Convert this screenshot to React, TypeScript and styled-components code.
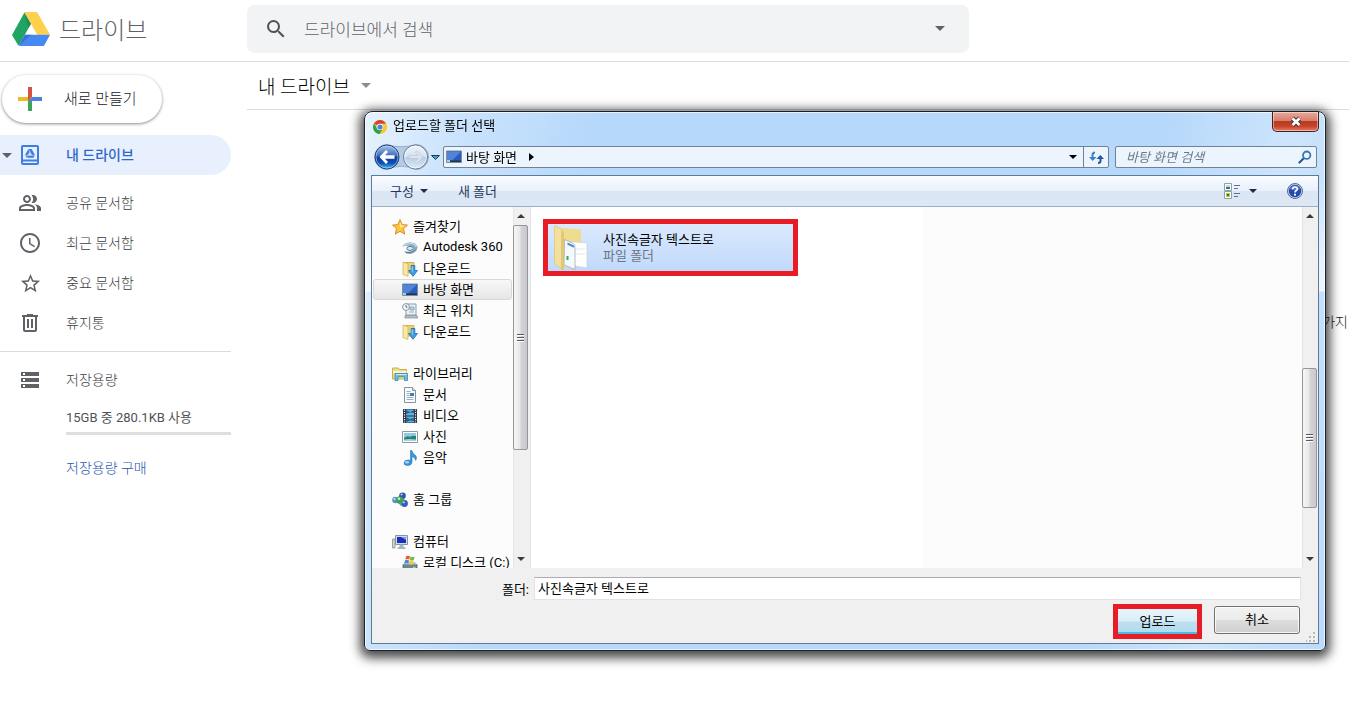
import React from 'react';
import styled, { createGlobalStyle, css } from 'styled-components';
import { MdAccessTime, MdOutlinePeopleAlt, MdSearch, MdStarBorder } from 'react-icons/md';

const GlobalStyle = createGlobalStyle`
  *, *::before, *::after { box-sizing: border-box; }
  body { margin: 0; background: #fff; }
  body, button, input { font-family: Roboto, 'Noto Sans CJK KR', sans-serif; }
  button, input { margin: 0; padding: 0; border: 0; background: none; color: inherit; }
  button { cursor: pointer; }
  svg { display: block; flex: none; }
`;

/* ---------- Drive page ---------- */

const Page = styled.div`
  min-height: 100vh;
  display: flex;
  flex-direction: column;
  color: #4f5357;
  font-size: 14px;
  overflow: hidden;
`;

const Header = styled.header`
  display: flex;
  height: 62px;
  padding-bottom: 4px;
  align-items: center;
  border-bottom: 1px solid #dadce0;
`;

const Brand = styled.a`
  display: flex;
  align-items: center;
  gap: 9px;
  width: 247px;
  padding-left: 12px;
  color: #5f6368;
  font-size: 24px;
  font-weight: 300;
  text-decoration: none;
`;

const SearchBox = styled.form`
  display: flex;
  align-items: center;
  flex: 0 1 722px;
  height: 48px;
  padding: 0 17px;
  border-radius: 8px;
  background: #f1f3f4;
`;

const SearchInput = styled.input`
  flex: 1;
  min-width: 0;
  margin-left: 16px;
  padding-top: 2px;
  font-size: 17px;
  font-weight: 300;
  outline: none;
  &::placeholder { color: #5f6368; opacity: 1; }
`;

const IconButton = styled.button`
  display: flex;
  align-items: center;
  justify-content: center;
  width: 24px;
  height: 24px;
`;

const Columns = styled.div`
  display: flex;
  flex: 1;
`;

const Sidebar = styled.aside`
  width: 231px;
  margin-right: 16px;
  flex: none;
`;

const NewButton = styled.button`
  display: flex;
  align-items: center;
  gap: 22px;
  width: 160px;
  height: 48px;
  margin: 13px 0 12px 2px;
  padding-left: 16px;
  border-radius: 24px;
  background: #fff;
  color: #202124;
  font-size: 15px;
  font-weight: 300;
  box-shadow: 0 1px 2px rgba(60, 64, 67, 0.35), 0 1px 3px 1px rgba(60, 64, 67, 0.2);
  span { padding-bottom: 3px; }
`;

const NavLink = styled.a<{ $active?: boolean }>`
  display: grid;
  grid-template-columns: 18px 24px 1fr;
  align-items: center;
  height: 40px;
  color: #5f6368;
  text-decoration: none;
  span { padding: 0 0 2px 24px; color: #3c4043; font-weight: 300; }
  svg { justify-self: center; }
  svg:first-child { justify-self: start; margin-left: 2px; }
  ${(p) =>
    p.$active &&
    css`
      margin-bottom: 8px;
      border-radius: 0 20px 20px 0;
      background: #e8f0fe;
      span { color: #2f67c9; font-weight: 500; }
    `}
`;

const Divider = styled.hr`
  height: 1px;
  margin: 8px 0;
  border: 0;
  background: #dadce0;
`;

const Quota = styled.div`
  display: flex;
  flex-direction: column;
  gap: 4px;
  margin-left: 66px;
  padding-top: 8px;
  font-size: 13px;
  line-height: 20px;
`;

const QuotaBar = styled.div`
  height: 3px;
  background: #dedede;
`;

const BuyLink = styled.a`
  margin-top: 19px;
  color: #1f57b0;
  font-size: 14px;
  font-weight: 300;
  text-decoration: none;
`;

const Main = styled.main`
  flex: 1;
  min-width: 0;
`;

const PathBar = styled.div`
  display: flex;
  align-items: center;
  height: 48px;
  padding-left: 11px;
  border-bottom: 1px solid #dadce0;
`;

const PathButton = styled.button`
  display: flex;
  align-items: center;
  gap: 11px;
  color: #000;
  font-size: 19px;
  font-weight: 300;
`;

const EmptyHint = styled.p`
  margin: 202px 1px 0 0;
  color: #202124;
  font-weight: 300;
  line-height: 20px;
  text-align: right;
`;

/* ---------- Folder picker window ---------- */

const Window = styled.section`
  position: fixed;
  top: 111px;
  right: 23px;
  bottom: 65px;
  left: 364px;
  display: flex;
  flex-direction: column;
  padding: 0 6px 6px;
  border: 1px solid #17242e;
  border-radius: 8px 8px 6px 6px;
  background:
    linear-gradient(180deg, rgba(255, 255, 255, 0) 60px, rgba(255, 255, 255, 0.75) 179px, rgba(255, 255, 255, 0) 180px),
    linear-gradient(100deg, #e6f2fe 0, #cbe3fc 9%, #b6d8fb 22%, #b6d8fb 76%, #cde4fc 88%, #bcdafa 100%);
  box-shadow: inset 0 0 0 1px rgba(255, 255, 255, 0.7), 0 3px 11px 4px rgba(0, 0, 0, 0.72);
  color: #000;
  font-size: 13px;
  button, input { font-size: 13px; }
`;

const TitleBar = styled.div`
  display: flex;
  align-items: center;
  height: 30px;
  padding-left: 2px;
`;

const Title = styled.h1`
  flex: 1;
  margin: 0 0 0 6px;
  padding-bottom: 2px;
  font-size: 13px;
  font-weight: 400;
  line-height: 20px;
`;

const CloseButton = styled.button`
  display: flex;
  align-items: center;
  justify-content: center;
  align-self: flex-start;
  width: 47px;
  height: 20px;
  border: 1px solid #4b1d1d;
  border-top: 0;
  border-radius: 0 0 5px 5px;
  background: linear-gradient(180deg, #e8a99b 0, #d6806f 45%, #bd3a20 50%, #c5432b 75%, #e08069 100%);
  box-shadow: inset 0 0 0 1px rgba(255, 255, 255, 0.45);
`;

const AddressRow = styled.div`
  display: flex;
  align-items: center;
  height: 33px;
  padding: 0 2px 3px 1px;
`;

const AddressBox = styled.div`
  display: flex;
  align-items: center;
  flex: 1;
  height: 22px;
  margin: 0 6px 0 1px;
  border: 1px solid #6f8296;
  border-radius: 2px;
  background: #ecf5fe;
`;

const Crumb = styled.button`
  display: flex;
  align-items: center;
  gap: 4px;
  padding-left: 2px;
  margin-right: auto;
  span { padding-bottom: 1px; }
  svg:last-child { margin-left: 8px; }
`;

const AddressButton = styled.button<{ $divided?: boolean }>`
  display: flex;
  align-items: center;
  justify-content: center;
  width: ${(p) => (p.$divided ? 25 : 20)}px;
  height: 20px;
  border-left: ${(p) => (p.$divided ? '1px solid #6f8296' : '0')};
`;

const FolderSearch = styled.label`
  display: flex;
  align-items: center;
  width: 202px;
  height: 22px;
  padding: 0 4px 0 10px;
  border: 1px solid #6f8296;
  border-radius: 2px;
  background: #ecf5fe;
  input {
    flex: 1;
    min-width: 0;
    outline: none;
  }
  input::placeholder { color: #6d7a87; font-style: italic; opacity: 1; }
`;

const Client = styled.div`
  display: flex;
  flex: 1;
  flex-direction: column;
  min-height: 0;
  border: 1px solid #5d7a96;
  background: #f0f0f0;
`;

const Toolbar = styled.div`
  display: flex;
  align-items: center;
  gap: 30px;
  height: 31px;
  padding: 0 15px 0 18px;
  border-bottom: 1px solid #9cafc6;
  background: linear-gradient(180deg, #fafcff 0, #e9f1fb 48%, #dbe6f4 52%, #dde7f5 100%);
`;

const ToolButton = styled.button<{ $end?: boolean }>`
  display: flex;
  align-items: center;
  gap: ${(p) => (p.$end ? 9 : 6)}px;
  margin-left: ${(p) => (p.$end ? 'auto' : '0')};
  color: #1e395b;
  span { padding-bottom: 2px; }
`;

const Body = styled.div`
  display: flex;
  flex: 1;
  min-height: 0;
`;

const Tree = styled.nav`
  display: flex;
  flex-direction: column;
  gap: 21px;
  width: 141px;
  padding: 9px 1px 0;
  overflow: hidden;
  background: #fcfcfc;
`;

const TreeGroup = styled.div`
  display: flex;
  flex: none;
  flex-direction: column;
`;

const TreeItem = styled.button<{ $child?: boolean; $selected?: boolean }>`
  display: flex;
  align-items: center;
  gap: 5px;
  height: 21px;
  padding-left: ${(p) => (p.$child ? 28 : 18)}px;
  border: 1px solid ${(p) => (p.$selected ? '#d9d9d9' : 'transparent')};
  border-radius: 3px;
  background: ${(p) => (p.$selected ? 'linear-gradient(180deg, #f8f8f8, #e6e6e6)' : 'none')};
  white-space: nowrap;
  span { padding-bottom: 2px; }
`;

const Scroll = styled.div<{ $rows: string }>`
  display: grid;
  grid-template-rows: 18px ${(p) => p.$rows} 18px;
  flex: none;
  width: 16px;
  background: #f0f0f0;
  box-shadow: inset 1px 0 0 #e6e6e6;
`;

const ScrollArrow = styled.button`
  display: flex;
  align-items: center;
  justify-content: center;
`;

const Thumb = styled.div`
  display: flex;
  flex-direction: column;
  align-items: center;
  justify-content: center;
  gap: 1px;
  width: 15px;
  border: 1px solid #979797;
  border-radius: 2px;
  background: linear-gradient(90deg, #f6f6f6 0, #e8e8ea 45%, #d3d3d8 55%, #c8c8ce 100%);
`;

const Grip = styled.i`
  width: 7px;
  height: 2px;
  border-bottom: 1px solid #fff;
  background: #55585c;
`;

const Files = styled.div`
  flex: 1;
  min-width: 0;
  margin-left: 1px;
  padding: 12px;
  border-left: 1px solid #dfe6f0;
  background: linear-gradient(90deg, #fff 392px, #fcfcfc 392px);
`;

const Folder = styled.button`
  display: flex;
  align-items: center;
  width: 255px;
  height: 57px;
  padding-left: 5px;
  border: 5px solid #e81c24;
  background: linear-gradient(180deg, #dbe9fd, #c0d9fb);
  text-align: left;
`;

const FolderText = styled.span`
  display: flex;
  flex-direction: column;
  margin-left: 14px;
  line-height: 16px;
  small { color: #6d7683; font-size: 13px; }
`;

const Footer = styled.form`
  display: flex;
  flex-direction: column;
  gap: 4px;
  padding: 9px 2px 1px;
`;

const NameRow = styled.div`
  display: flex;
  align-items: center;
  padding-right: 15px;
  label { width: 160px; padding-right: 5px; text-align: right; }
  input {
    flex: 1;
    min-width: 0;
    height: 23px;
    padding: 0 3px 2px;
    border: 1px solid #e2e3ea;
    border-top-color: #abadb3;
    background: #fff;
  }
`;

const Actions = styled.div`
  display: flex;
  align-items: flex-start;
  justify-content: flex-end;
  height: 38px;
  button { padding-bottom: 3px; }
`;

const UploadButton = styled.button`
  width: 89px;
  height: 35px;
  border: 5px solid #e81c24;
  background: linear-gradient(180deg, #eaf5fb 0, #d9edf8 48%, #bedfef 52%, #b2dcef 90%, #48bce4 92%);
`;

const CancelButton = styled.button`
  width: 86px;
  height: 28px;
  margin: 2px 6px 0 12px;
  border: 1px solid #707070;
  border-radius: 3px;
  background: linear-gradient(180deg, #f2f2f2 0, #ebebeb 48%, #dddddd 52%, #cfcfcf 100%);
  box-shadow: inset 0 0 0 1px rgba(255, 255, 255, 0.8);
`;

const ResizeHandle = styled.svg`
  align-self: flex-end;
`;

/* ---------- Drawings ---------- */

const Caret = ({ size = 8, color = '#1e2a4a', up = false }: { size?: number; color?: string; up?: boolean }) => (
  <svg width={size} height={size / 2} viewBox="0 0 8 4" aria-hidden="true">
    <path d={up ? 'M0 4h8L4 0z' : 'M0 0h8L4 4z'} fill={color} />
  </svg>
);

const DriveLogo = () => (
  <svg width="38" height="34" viewBox="0 0 38 34" aria-hidden="true">
    <path d="M12.4.6 19 11.8 7 33.2Q6.400 33.600 6 33L.3 23.600Q0 23 .3 22.400z" fill="#1fa463" />
    <path d="M12.400.600Q12.800 0 13.400 0H24.400Q25 0 25.400.600L38 22.800H25.300z" fill="#ffd04b" />
    <path d="M7 33.200 12.900 22.800H38L32.300 33.300Q32 34 31.200 34H7.600Q6.800 34 7 33.200z" fill="#4688f4" />
    <path d="M7 33.200 12.900 22.800 19.500 22.800z" fill="#2a62c4" opacity=".6" />
    <path d="M12.400.600 19 11.800 16.500 16.200z" fill="#0f7a46" opacity=".45" />
  </svg>
);

const PlusIcon = () => (
  <svg width="24" height="24" viewBox="6 6 24 24" aria-hidden="true">
    <path fill="#3ba55b" d="M16 16v14h4V20z" />
    <path fill="#4a84e0" d="M30 16H20l-4 4h14z" />
    <path fill="#ecba2a" d="M6 16v4h10l4-4z" />
    <path fill="#d35344" d="M20 16V6h-4v14z" />
  </svg>
);

const MyDriveIcon = () => (
  <svg width="18" height="20" viewBox="0 0 18 20" fill="#3f7de0" aria-hidden="true">
    <path fillRule="evenodd" d="M2 0h14a2 2 0 0 1 2 2v16a2 2 0 0 1-2 2H2a2 2 0 0 1-2-2V2a2 2 0 0 1 2-2zm0 2v12.500h14V2zm0 14.500V18h14v-1.500z" />
    <path fillRule="evenodd" d="M7.400 4h3.200l3.400 6-1.500 2.700h-7L4 10zM9 7.200 7.300 10.300h3.400z" />
    <path d="m7.400 4 3.300 6.300M4 10l2 .3h8M5.500 12.700 9 6.500" stroke="#e8f0fe" strokeWidth=".5" fill="none" />
  </svg>
);

const TrashIcon = () => (
  <svg width="24" height="24" viewBox="0 0 24 24" fill="currentColor" aria-hidden="true">
    <path fillRule="evenodd" d="M15 4V3H9v1H4v2h1v13a2 2 0 0 0 2 2h10a2 2 0 0 0 2-2V6h1V4zm2 15H7V6h10zM9 8h2v9H9zm4 0h2v9h-2z" />
  </svg>
);

const StorageIcon = () => (
  <svg width="18" height="16" viewBox="0 0 18 16" fill="currentColor" aria-hidden="true">
    <path fillRule="evenodd" d="M0 0h18v4H0zm2 1v2h2V1zM0 6h18v4H0zm2 1v2h2V7zM0 12h18v4H0zm2 1v2h2v-2z" />
  </svg>
);

const ChromeIcon = () => (
  <svg width="14" height="14" viewBox="0 0 14 14" aria-hidden="true">
    <circle cx="7" cy="7" r="7" fill="#f9c828" />
    <path d="M7 7 1 3.400A7 7 0 0 1 13.100 3.600L7 3.700z" fill="#d8432f" />
    <path d="M1 3.400A7 7 0 0 0 6.600 14L9.800 8.700 7 10 4.100 8.600z" fill="#2f9e4f" />
    <circle cx="7" cy="7" r="3.300" fill="#fff" />
    <circle cx="7" cy="7" r="2.600" fill="#4a83dc" />
  </svg>
);

const CloseGlyph = () => (
  <svg width="14" height="12" viewBox="0 0 14 12" aria-hidden="true">
    <path d="M3.500 2.500 10.500 9M10.500 2.500 3.500 9" stroke="#4d2a2a" strokeWidth="4.600" />
    <path d="M3.500 2.500 10.500 9M10.500 2.500 3.500 9" stroke="#fff" strokeWidth="2.800" />
  </svg>
);

const HistoryButtons = () => (
  <svg width="70" height="28" viewBox="0 0 70 28" role="img" aria-label="뒤로 앞으로">
    <defs>
      <linearGradient id="back" x1="0" y1="0" x2="0" y2="1">
        <stop offset="0" stopColor="#a9c3ea" />
        <stop offset=".45" stopColor="#3c6fbd" />
        <stop offset=".5" stopColor="#0c3f9c" />
        <stop offset=".75" stopColor="#0b4db4" />
        <stop offset="1" stopColor="#4cc6f5" />
      </linearGradient>
      <linearGradient id="forward" x1="0" y1="0" x2="0" y2="1">
        <stop offset="0" stopColor="#eef5fc" />
        <stop offset=".48" stopColor="#d5e3f2" />
        <stop offset=".52" stopColor="#b8cde3" />
        <stop offset="1" stopColor="#dcebf9" />
      </linearGradient>
    </defs>
    <path d="M15 1.500Q29 6 44 1.500A12.500 12.500 0 0 1 44 26.500Q29 20 15 26.500A12.500 12.500 0 0 1 15 1.500z" fill="#b4cbe4" stroke="#98b0cb" />
    <circle cx="15" cy="14" r="12" fill="url(#back)" stroke="#213f73" />
    <circle cx="15" cy="14" r="11" fill="none" stroke="#bcd3f0" strokeOpacity=".6" />
    <path d="M7.500 14l6.500-7 2 2L13 12.200H22.500v3.600H13l3 3.200L14 21z" fill="#fff" />
    <circle cx="43.500" cy="14" r="12" fill="url(#forward)" stroke="#66798e" />
    <circle cx="43.500" cy="14" r="11" fill="none" stroke="#fff" strokeOpacity=".6" />
    <path d="M51 14l-6-6.500-1.800 1.800 3 3.100H37v3.200h9.200l-3 3.100 1.800 1.800z" fill="#d9e5f1" stroke="#b7c7d8" strokeWidth=".7" />
    <path d="M59.500 12.500h8l-4 4z" fill="#4f9cc8" stroke="#173f63" />
  </svg>
);

const RefreshIcon = () => (
  <svg width="15" height="13" viewBox="0 0 15 13" aria-hidden="true">
    <path d="M3.500 8V4Q3.500 1.500 6 1.500" fill="none" stroke="#3b83c4" strokeWidth="2" />
    <path d="M0 6h7.500L3.700 10z" fill="#3b83c4" />
    <path d="M11.500 6v4Q11.500 12 9 12" fill="none" stroke="#23579d" strokeWidth="2" />
    <path d="M7.500 8H15L11.300 4z" fill="#23579d" />
  </svg>
);

const Magnifier = () => (
  <svg width="14" height="14" viewBox="0 0 14 14" fill="none" aria-hidden="true">
    <path d="M1.500 12.500 6 8" stroke="#2b568d" strokeWidth="2.200" strokeLinecap="round" />
    <circle cx="8.700" cy="5.200" r="3.700" fill="#eaf6ff" stroke="#3a78b5" strokeWidth="1.800" />
  </svg>
);

const ViewIcon = () => (
  <svg width="16" height="16" viewBox="0 0 16 16" aria-hidden="true">
    <path d="M.5.500h7v7h-7zM.5 8.500h7v7h-7z" fill="#fff" stroke="#8fa0a6" />
    <path d="M2 2h4v2H2z" fill="#b5dcf2" />
    <path d="M2 4h4v2H2z" fill="#2a7f72" />
    <path d="M2 10h4v4H2z" fill="#b9cf3f" />
    <path d="M3 11h2v2H3z" fill="#3b6b2c" />
    <path d="M10 2.500h6M10 5.500h4M10 10.500h6M10 13.500h4" stroke="#56719a" />
  </svg>
);

const HelpIcon = () => (
  <svg width="16" height="16" viewBox="0 0 16 16" aria-hidden="true">
    <circle cx="8" cy="8" r="7.500" fill="#c7d3e6" stroke="#596e93" />
    <circle cx="8" cy="8" r="6.200" fill="#2449a9" />
    <path d="M2.500 6a6 6 0 0 1 11 0Q8 8.500 2.500 6z" fill="#7f9be0" opacity=".6" />
    <path d="M5.700 6.200Q5.800 4 8 4t2.300 1.900Q10.300 7 9 7.800 8 8.400 8 9.400" fill="none" stroke="#fff" strokeWidth="1.600" />
    <circle cx="8" cy="11.700" r="1.100" fill="#fff" />
  </svg>
);

const glyphs: Record<string, React.ReactNode> = {
  star: (
    <>
      <path d="M8 .6l2.200 5 5.300.5-4 3.600 1.200 5.400L8 12.300l-4.700 2.800 1.200-5.400-4-3.600 5.300-.5z" fill="#fbc53c" stroke="#d9822b" strokeWidth=".9" />
      <path d="M8 2.600l1.500 3.700 3.700.5L8 9z" fill="#fff0a8" opacity=".8" />
    </>
  ),
  autodesk: (
    <>
      <path d="M.3 6.500Q2.500 2.500 8 2.200q6.300.2 7.600 5-.8 5.300-7 6.800-5.600.3-6.100-3.200 3 1.500 6.500.5 3-1 2.500-3Q11 5.800 8 5.800 4 5.500.3 6.500z" fill="#86a9bd" />
      <path d="M1.500 6Q5 3 9 3.400q4.300.6 5.200 3.600" fill="none" stroke="#c9dde7" strokeWidth="1.200" />
      <ellipse cx="8" cy="8.400" rx="3.200" ry="2" fill="#dbe9f0" stroke="#4f7c95" />
      <path d="M4 12.600q5.500 1 9.500-3" fill="none" stroke="#557f95" />
    </>
  ),
  download: (
    <>
      <path d="M2.500 1.500H12V12H2.500z" fill="#ecd07a" stroke="#c9a64a" strokeWidth=".8" />
      <path d="M1 1l5 1.800V15.300L1 13.600z" fill="#f9e9a5" stroke="#cdae55" strokeWidth=".7" />
      <path d="M9.200 4.500h3.600v5h2.700l-4.500 5.800L6.500 9.500h2.700z" fill="#3ba0e4" stroke="#1d6bb0" strokeWidth=".8" />
      <path d="M10.200 5.500v5" stroke="#a6dbf8" />
    </>
  ),
  desktop: (
    <>
      <path d="M.5 2h15v11.500H.5z" fill="#31588f" stroke="#7b8ea3" />
      <path d="M1 2.500h14v9H1z" fill="#2a5cbd" />
      <path d="M1 2.500h14L6 11.500H1z" fill="#5f92e0" opacity=".75" />
      <path d="M1 11.500h14V13H1z" fill="#22344e" />
      <path d="M1 11h3v2H1z" fill="#9fd3ea" />
    </>
  ),
  recent: (
    <>
      <path d="M4 1h10v11H4z" fill="#eff3f6" stroke="#8d9ca8" />
      <path d="M8 4h4v3H8zM7 9h5" fill="#bcd4e4" stroke="#7f9db2" strokeWidth=".8" />
      <path d="M3 12.500h12l.8 2.500H3z" fill="#b5c0c8" stroke="#808f9a" strokeWidth=".7" />
      <circle cx="4" cy="4" r="3.400" fill="#f7f9fa" stroke="#8694a0" />
      <path d="M4 2v2.200h1.500" fill="none" stroke="#536373" strokeWidth=".9" />
    </>
  ),
  library: (
    <>
      <path d="M.5 3V2h6l1 1.500h7V13H.5z" fill="#f1dc86" stroke="#c5a74e" strokeWidth=".9" />
      <path d="M1 5h13.500v2H1z" fill="#fdf3c1" />
      <path d="M3 7.500h12.500v7h-3v-3.800H6v3.800H3z" fill="#6cbfe0" stroke="#3987ae" strokeWidth=".8" />
      <path d="M4 8.500h10.500" stroke="#c9ecf9" />
    </>
  ),
  document: (
    <>
      <path d="M2.500.5h8l3 3v12h-11z" fill="#fbfcfd" stroke="#8593a0" />
      <path d="M10.500.5v3h3" fill="#dbe3ea" stroke="#8593a0" />
      <path d="M4.500 4.500h4M4.500 6.500h3M4.500 8.500h3M4.500 10.500h7M4.500 12.500h7" stroke="#9cb0c3" />
      <path d="M8 6h4v3H8z" fill="#3d7eb5" />
    </>
  ),
  video: (
    <>
      <path d="M1 1h14v14H1z" fill="#283443" />
      <path d="M4 1.500h8v6H4zM4 8.500h8v6H4z" fill="#5fb0df" />
      <path d="M4 2l4 2 4-2v3L8 4.500 4 6zM4 9l3.500 2L12 10v3l-4-.5L4 14z" fill="#275f8c" />
      <path d="M2.500 1.500v13M13.500 1.500v13" stroke="#e9eef2" strokeWidth="1.200" strokeDasharray="1.200 1.200" />
    </>
  ),
  picture: (
    <>
      <path d="M.5 2.500h15v11H.5z" fill="#fff" stroke="#8b99a4" />
      <path d="M2 4h12v8H2z" fill="#8ccbe6" />
      <path d="M2 9q4-3 6-1 3-2 6-1v5H2z" fill="#2d7d76" />
      <path d="M2 10.500q5-1 12 0V12H2z" fill="#9fd6e0" />
    </>
  ),
  music: (
    <>
      <path d="M8.500.5h1.400Q10.500 3.500 13 5t.7 5.500Q13.500 7.500 10 6.500v6Q9.500 15.500 5.500 15.500 2 15.500 2 13q.3-3 4.200-3 1.500 0 2.300.6z" fill="#3597dc" stroke="#1c67ab" strokeWidth=".5" />
      <ellipse cx="5" cy="12.200" rx="2" ry="1.200" fill="#9dd5f6" />
    </>
  ),
  homegroup: (
    <>
      <path d="M4 7l6-4 3 8-4 2z" fill="none" stroke="#7da0c0" strokeWidth="1.500" />
      <circle cx="3.400" cy="8" r="3.200" fill="#5b93d3" />
      <circle cx="10.500" cy="3.700" r="3.300" fill="#2d55a8" />
      <circle cx="12.500" cy="11.500" r="3.400" fill="#3660b5" />
      <circle cx="7.800" cy="8.200" r="3.600" fill="#3ea453" />
      <circle cx="7" cy="6.700" r="1.300" fill="#c8f0c4" />
      <circle cx="9.600" cy="2.500" r="1.100" fill="#b5d0f5" />
      <circle cx="2.600" cy="7" r="1.100" fill="#c0dcf8" />
      <circle cx="11.800" cy="10.300" r="1.100" fill="#b5d0f5" />
    </>
  ),
  computer: (
    <>
      <path d="M.5 5h2.500v9H.5z" fill="#cfd6cc" stroke="#87928a" strokeWidth=".8" />
      <path d="M3.500 1.500h12v9h-12z" fill="#d4dbe3" stroke="#8593a3" />
      <path d="M5 3h9v6H5z" fill="#1a2fc0" />
      <path d="M9 3h5v3z" fill="#7f9bf0" />
      <path d="M8 10.500h3l1 3H7z" fill="#a5b1bd" />
      <path d="M5.500 13.500h8v1.200h-8z" fill="#8593a3" />
    </>
  ),
  disk: (
    <>
      <path d="M1 9.500h14V15H1z" fill="#6e8794" stroke="#45606d" strokeWidth=".8" />
      <path d="M3 7h10l2 2.500H1z" fill="#b7c5cc" />
      <path d="M4 1.200q2-1 4 0L7.300 4.500q-2-1-4 0z" fill="#e5602c" />
      <path d="M8.600 1.500q2 1 4 0l-.8 3.400q-2 1-4 0z" fill="#78b943" />
      <path d="M3 5.200q2-1 4 0l-.7 3.300q-2-1-4 0z" fill="#3d8fd6" />
      <path d="M7.600 5.500q2 1 4 0l-.8 3.400q-2 1-4 0z" fill="#f7c832" />
      <path d="M11 12.500h2.500" stroke="#9fe36f" strokeWidth="1.200" />
    </>
  ),
};

const Glyph = ({ name }: { name: string }) => (
  <svg width="16" height="16" viewBox="0 0 16 16" aria-hidden="true">
    {glyphs[name]}
  </svg>
);

const FolderIcon = () => (
  <svg width="36" height="46" viewBox="0 0 36 46" aria-hidden="true">
    <path d="M3 2.500 28 4.500V38L12 43z" fill="#f0dc8f" />
    <path d="M17 16.500l17 1.500v25l-15-2.500z" fill="#fff" stroke="#c6ced6" strokeWidth=".7" />
    <path d="M23 24h9M23 29h9" stroke="#dfe4e8" />
    <path d="M11.500 14.500l9 4q1.500 1 1.500 3V44.500L11 40z" fill="#f6f9fc" stroke="#9eabb7" strokeWidth=".8" />
    <path d="M14.500 17.500l6.500 3v2.200l-6.500-3z" fill="#4a8bd4" />
    <path d="M13.500 31h2v4h-2z" fill="#39a556" />
    <path d="M1.500 1.500Q2 0 3.500 1L9 5q1.500 1 1.500 3v37L2.800 39.500Q1.500 39 1.500 37z" fill="#f3e09a" stroke="#dcc474" strokeWidth=".7" />
    <path d="M8 5l2.500 3v37L8 43.500z" fill="#d9bd66" opacity=".7" />
  </svg>
);

const ScrollBar = ({ rows }: { rows: string }) => (
  <Scroll $rows={rows}>
    <ScrollArrow type="button" aria-label="위로 스크롤">
      <Caret color="#3a3a3a" up />
    </ScrollArrow>
    <span />
    <Thumb>
      <Grip />
      <Grip />
      <Grip />
    </Thumb>
    <span />
    <ScrollArrow type="button" aria-label="아래로 스크롤">
      <Caret color="#3a3a3a" />
    </ScrollArrow>
  </Scroll>
);

/* ---------- Data ---------- */

const links = [
  { label: '공유 문서함', icon: <MdOutlinePeopleAlt size={24} /> },
  { label: '최근 문서함', icon: <MdAccessTime size={24} /> },
  { label: '중요 문서함', icon: <MdStarBorder size={23} /> },
  { label: '휴지통', icon: <TrashIcon /> },
];

const tree = [
  {
    label: '즐겨찾기',
    icon: 'star',
    children: [
      ['Autodesk 360', 'autodesk'],
      ['다운로드', 'download'],
      ['바탕 화면', 'desktop'],
      ['최근 위치', 'recent'],
      ['다운로드', 'download'],
    ],
  },
  {
    label: '라이브러리',
    icon: 'library',
    children: [
      ['문서', 'document'],
      ['비디오', 'video'],
      ['사진', 'picture'],
      ['음악', 'music'],
    ],
  },
  { label: '홈 그룹', icon: 'homegroup', children: [] },
  { label: '컴퓨터', icon: 'computer', children: [['로컬 디스크 (C:)', 'disk']] },
];

const FolderPicker = () => (
  <Window role="dialog" aria-labelledby="picker-title">
    <TitleBar>
      <ChromeIcon />
      <Title id="picker-title">업로드할 폴더 선택</Title>
      <CloseButton type="button" aria-label="닫기">
        <CloseGlyph />
      </CloseButton>
    </TitleBar>
    <AddressRow>
      <HistoryButtons />
      <AddressBox>
        <Crumb type="button">
          <Glyph name="desktop" />
          <span>바탕 화면</span>
          <svg width="5" height="8" viewBox="0 0 5 8" aria-hidden="true">
            <path d="M0 0v8l5-4z" fill="#000" />
          </svg>
        </Crumb>
        <AddressButton type="button" aria-label="이전 위치">
          <Caret size={8} color="#000" />
        </AddressButton>
        <AddressButton type="button" $divided aria-label="새로 고침">
          <RefreshIcon />
        </AddressButton>
      </AddressBox>
      <FolderSearch>
        <input type="text" placeholder="바탕 화면 검색" aria-label="바탕 화면 검색" />
        <Magnifier />
      </FolderSearch>
    </AddressRow>
    <Client>
      <Toolbar>
        <ToolButton type="button">
          <span>구성</span>
          <Caret />
        </ToolButton>
        <ToolButton type="button">
          <span>새 폴더</span>
        </ToolButton>
        <ToolButton type="button" $end aria-label="보기 변경">
          <ViewIcon />
          <Caret />
        </ToolButton>
        <ToolButton type="button" aria-label="도움말">
          <HelpIcon />
        </ToolButton>
      </Toolbar>
      <Body>
        <Tree>
          {tree.map((group) => (
            <TreeGroup key={group.label}>
              <TreeItem type="button">
                <Glyph name={group.icon} />
                <span>{group.label}</span>
              </TreeItem>
              {group.children.map(([label, icon], i) => (
                <TreeItem type="button" key={i} $child $selected={label === '바탕 화면'}>
                  <Glyph name={icon} />
                  <span>{label}</span>
                </TreeItem>
              ))}
            </TreeGroup>
          ))}
        </Tree>
        <ScrollBar rows="0fr 225fr 100fr" />
        <Files>
          <Folder type="button">
            <FolderIcon />
            <FolderText>
              사진속글자 텍스트로
              <small>파일 폴더</small>
            </FolderText>
          </Folder>
        </Files>
        <ScrollBar rows="143fr 140fr 42fr" />
      </Body>
      <Footer onSubmit={(e) => e.preventDefault()}>
        <NameRow>
          <label htmlFor="folder-name">폴더:</label>
          <input id="folder-name" type="text" defaultValue="사진속글자 텍스트로" />
        </NameRow>
        <Actions>
          <UploadButton type="submit">업로드</UploadButton>
          <CancelButton type="button">취소</CancelButton>
          <ResizeHandle width="10" height="10" viewBox="0 0 10 10" aria-hidden="true">
            <path d="M7 0h2v2H7zM7 4h2v2H7zM3 4h2v2H3zM7 8h2v2H7zM3 8h2v2H3zM0 8h1v2H0z" fill="#b9b9b9" />
          </ResizeHandle>
        </Actions>
      </Footer>
    </Client>
  </Window>
);

export default function App() {
  return (
    <>
      <GlobalStyle />
      <Page>
        <Header>
          <Brand href="#">
            <DriveLogo />
            드라이브
          </Brand>
          <SearchBox role="search" onSubmit={(e) => e.preventDefault()}>
            <IconButton type="submit" aria-label="검색">
              <MdSearch size={24} />
            </IconButton>
            <SearchInput type="text" placeholder="드라이브에서 검색" aria-label="드라이브에서 검색" />
            <IconButton type="button" aria-label="검색 옵션">
              <Caret size={10} color="#5f6368" />
            </IconButton>
          </SearchBox>
        </Header>
        <Columns>
          <Sidebar>
            <NewButton type="button">
              <PlusIcon />
              <span>새로 만들기</span>
            </NewButton>
            <NavLink href="#" $active>
              <Caret size={10} color="#5f6368" />
              <MyDriveIcon />
              <span>내 드라이브</span>
            </NavLink>
            {links.map((link) => (
              <NavLink href="#" key={link.label}>
                <i />
                {link.icon}
                <span>{link.label}</span>
              </NavLink>
            ))}
            <Divider />
            <NavLink href="#">
              <i />
              <StorageIcon />
              <span>저장용량</span>
            </NavLink>
            <Quota>
              15GB 중 280.1KB 사용
              <QuotaBar />
              <BuyLink href="#">저장용량 구매</BuyLink>
            </Quota>
          </Sidebar>
          <Main>
            <PathBar>
              <PathButton type="button">
                내 드라이브
                <Caret size={10} color="#8a8d91" />
              </PathButton>
            </PathBar>
            <EmptyHint>가지</EmptyHint>
          </Main>
        </Columns>
      </Page>
      <FolderPicker />
    </>
  );
}
